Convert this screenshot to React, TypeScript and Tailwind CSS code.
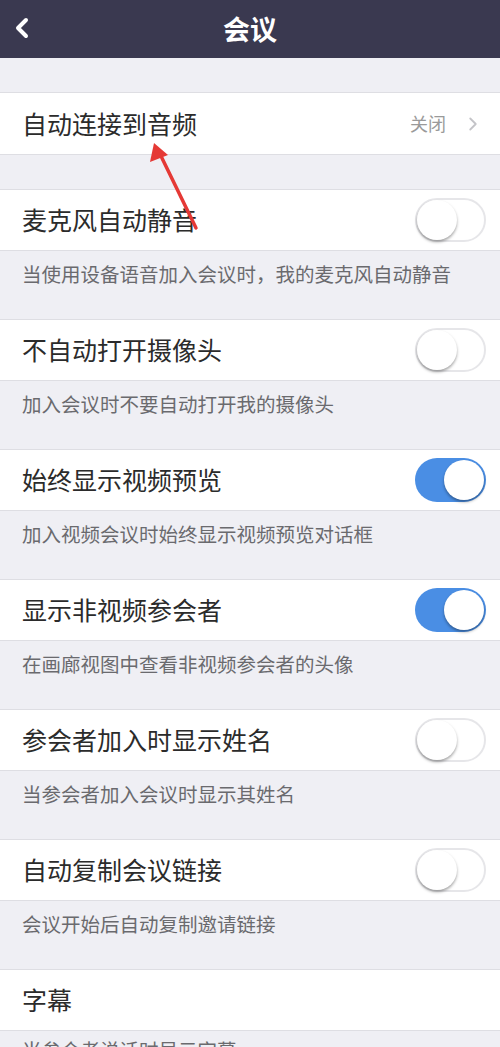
import { ChevronLeft, ChevronRight } from "lucide-react";

const FONT = { fontFamily: '"Noto Sans CJK SC", "Noto Sans", sans-serif' };

type Item = { title: string; desc: string; on: boolean };

const ITEMS: Item[] = [
  { title: "麦克风自动静音", desc: "当使用设备语音加入会议时，我的麦克风自动静音", on: false },
  { title: "不自动打开摄像头", desc: "加入会议时不要自动打开我的摄像头", on: false },
  { title: "始终显示视频预览", desc: "加入视频会议时始终显示视频预览对话框", on: true },
  { title: "显示非视频参会者", desc: "在画廊视图中查看非视频参会者的头像", on: true },
  { title: "参会者加入时显示姓名", desc: "当参会者加入会议时显示其姓名", on: false },
  { title: "自动复制会议链接", desc: "会议开始后自动复制邀请链接", on: false },
];

function Toggle({ on }: { on: boolean }) {
  return (
    <div
      className={
        on
          ? "flex h-[44px] w-[71px] items-center justify-end rounded-full bg-[#4a8ee4] p-[2px]"
          : "flex h-[44px] w-[71px] items-center justify-start rounded-full border-2 border-[#e6e6e9] bg-white"
      }
    >
      <div className="h-[40px] w-[40px] rounded-full bg-white shadow-[0_2px_3px_rgba(0,0,0,0.35)]" />
    </div>
  );
}

export default function App() {
  return (
    <div className="relative h-[1047px] w-[500px] overflow-hidden bg-[#efeff4]" style={FONT}>
      <div className="relative flex h-[58px] items-center justify-center bg-[#3a3950]">
        <ChevronLeft className="absolute left-[6px] top-[12px] text-white" size={32} strokeWidth={3} />
        <span className="text-[27px] font-bold text-white">会议</span>
      </div>

      <div className="h-[34px]" />
      <div className="flex h-[63px] items-center justify-between border-y border-[#dedee3] bg-white pl-[22px] pr-[16px]">
        <span className="text-[25px] text-[#2b2b2b]">自动连接到音频</span>
        <div className="flex items-center gap-[16px] text-[#9a9a9a]">
          <span className="text-[18px]">关闭</span>
          <ChevronRight size={22} strokeWidth={2} className="text-[#c4c4c8]" />
        </div>
      </div>

      <div className="h-[34px]" />
      {ITEMS.map((it) => (
        <div key={it.title}>
          <div className="flex h-[62px] items-center justify-between border-y border-[#dedee3] bg-white pl-[22px] pr-[14px]">
            <span className="text-[25px] text-[#2b2b2b]">{it.title}</span>
            <Toggle on={it.on} />
          </div>
          <div className="h-[68px] pl-[22px] pt-[8px] text-[19.5px] text-[#6a6a6e]">{it.desc}</div>
        </div>
      ))}
      <div className="flex h-[62px] items-center border-y border-[#dedee3] bg-white pl-[22px]">
        <span className="text-[25px] text-[#2b2b2b]">字幕</span>
      </div>
      <div className="pl-[22px] pt-[4px] text-[19.5px] text-[#6a6a6e]">当参会者说话时显示字幕</div>

      <svg className="absolute left-0 top-0" width="500" height="260" viewBox="0 0 500 260">
        <line x1="196" y1="228" x2="160" y2="154" stroke="#e53935" strokeWidth="3.5" strokeLinecap="round" />
        <polygon points="154,143 150,162 168,155" fill="#e53935" />
      </svg>
    </div>
  );
}
